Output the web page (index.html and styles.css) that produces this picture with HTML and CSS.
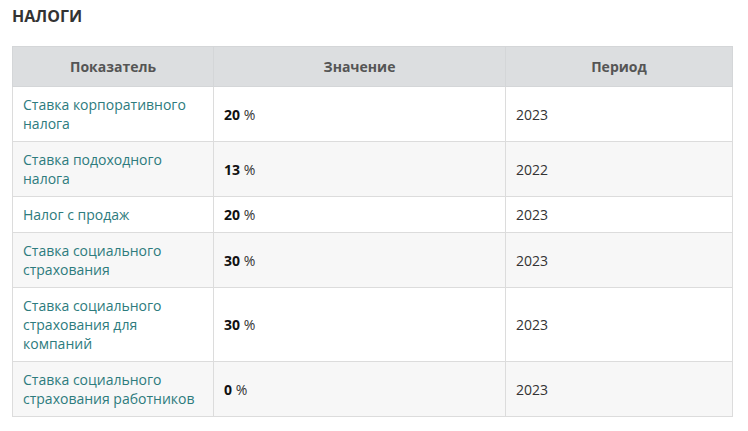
FILE: index.html
```html
<!DOCTYPE html>
<html lang="ru">
<head>
<meta charset="utf-8">
<link rel="stylesheet" href="styles.css">
</head>
<body>
<div class="wrap">
  <h2 class="title">НАЛОГИ</h2>
  <table class="tax">
    <colgroup><col class="c1"><col class="c2"><col class="c3"></colgroup>
    <thead>
      <tr><th>Показатель</th><th>Значение</th><th>Период</th></tr>
    </thead>
    <tbody>
      <tr><td><a href="#">Ставка корпоративного налога</a></td><td><b>20</b> %</td><td>2023</td></tr>
      <tr><td><a href="#">Ставка подоходного налога</a></td><td><b>13</b> %</td><td>2022</td></tr>
      <tr><td><a href="#">Налог с продаж</a></td><td><b>20</b> %</td><td>2023</td></tr>
      <tr><td><a href="#">Ставка социального страхования</a></td><td><b>30</b> %</td><td>2023</td></tr>
      <tr><td><a href="#">Ставка социального страхования для компаний</a></td><td><b>30</b> %</td><td>2023</td></tr>
      <tr><td><a href="#">Ставка социального страхования работников</a></td><td><b>0</b> %</td><td>2023</td></tr>
    </tbody>
  </table>
</div>
</body>
</html>
```
FILE: styles.css
```css
html, body { margin: 0; padding: 0; background: #fff; }
body { font-family: "Open Sans", "Liberation Sans", sans-serif; color: #333; font-size: 14px; }
.wrap { padding: 6px 16px 0 12px; }
.title { margin: 0 0 20px 0; font-size: 16px; font-weight: 700; color: #333; line-height: 20px; }
.tax { width: 721px; border-collapse: collapse; border: 1px solid #d9d9d9; }
.c1 { width: 201px; }
.c2 { width: 292px; }
.tax th { background: #dcdee0; color: #555; font-weight: 700; height: 39px; padding: 0 10px; border: 1px solid #d4d6d8; font-size: 14px; }
.tax td { padding: 8px 10px; line-height: 19px; border: 1px solid #dcdcdc; vertical-align: middle; color: #333; }
.tax tbody tr:nth-child(even) td { background: #f7f7f7; }
.tax a { color: #2d7b7d; text-decoration: none; }
.tax b { color: #111; font-weight: 700; }
```
